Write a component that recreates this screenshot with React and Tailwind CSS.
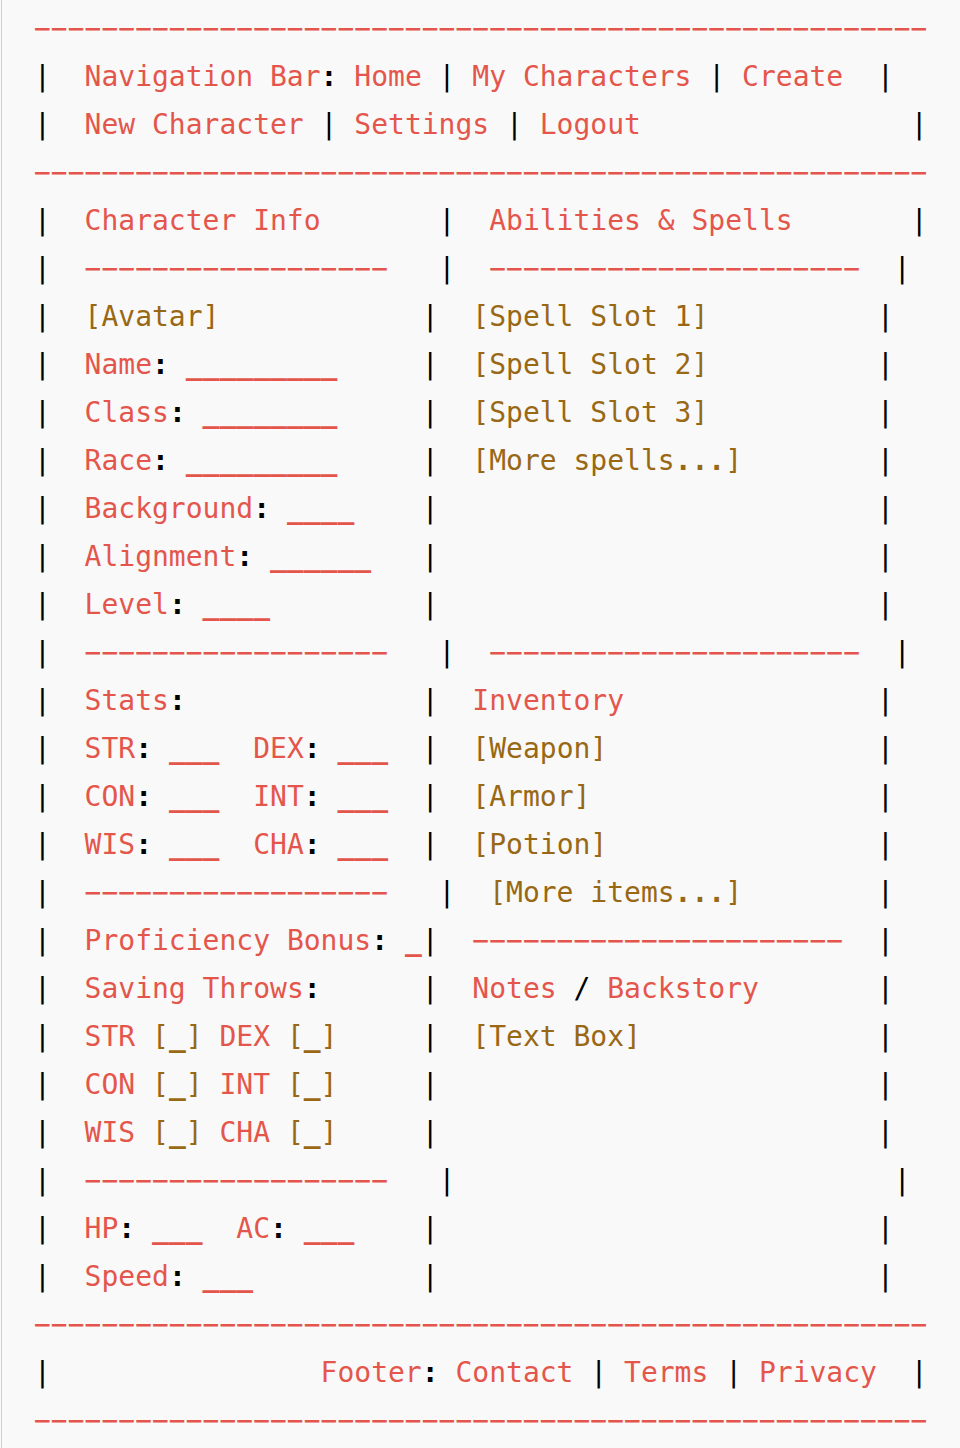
const RULE = "−".repeat(53);
const LEFT_RULE = "−".repeat(18);
const RIGHT_RULE = "−".repeat(22);

// Each row: [left text, divider column, right text, right text column, closing column]
const sheetRows = [
  ["Character Info", 24, "Abilities & Spells", 27, 52],
  [LEFT_RULE, 24, RIGHT_RULE, 27, 51],
  ["[Avatar]", 23, "[Spell Slot 1]", 26, 50],
  ["Name: _________", 23, "[Spell Slot 2]", 26, 50],
  ["Class: ________", 23, "[Spell Slot 3]", 26, 50],
  ["Race: _________", 23, "[More spells...]", 26, 50],
  ["Background: ____", 23, "", 26, 50],
  ["Alignment: ______", 23, "", 26, 50],
  ["Level: ____", 23, "", 26, 50],
  [LEFT_RULE, 24, RIGHT_RULE, 27, 51],
  ["Stats:", 23, "Inventory", 26, 50],
  ["STR: ___  DEX: ___", 23, "[Weapon]", 26, 50],
  ["CON: ___  INT: ___", 23, "[Armor]", 26, 50],
  ["WIS: ___  CHA: ___", 23, "[Potion]", 26, 50],
  [LEFT_RULE, 24, "[More items...]", 27, 50],
  ["Proficiency Bonus: _", 23, RIGHT_RULE, 26, 50],
  ["Saving Throws:", 23, "Notes / Backstory", 26, 50],
  ["STR [_] DEX [_]", 23, "[Text Box]", 26, 50],
  ["CON [_] INT [_]", 23, "", 26, 50],
  ["WIS [_] CHA [_]", 23, "", 26, 50],
  [LEFT_RULE, 24, "", 27, 51],
  ["HP: ___  AC: ___", 23, "", 26, 50],
  ["Speed: ___", 23, "", 26, 50],
];

function formatRow([left, divider, right, rightColumn, end]) {
  const start = ("|  " + left).padEnd(divider) + "|";
  return (start.padEnd(rightColumn) + right).padEnd(end) + "|";
}

// Colons, dots and blanks carry a heavier weight than the words around them.
function Marks({ text }) {
  return text.split(/([:._]+)/).map((part, i) =>
    i % 2 === 1 ? <span key={i} className="font-bold">{part}</span> : part
  );
}

function Line({ text }) {
  const tokens = text.match(/\[[^\]]*\]|[|:/]|\s+|[^\s|:/[\]]+/g) || [];
  return (
    <div>
      {tokens.map((token, i) => {
        if (token[0] === "[") {
          return <span key={i} className="text-[#986814]"><Marks text={token} /></span>;
        }
        if (/^[|:/\s]/.test(token)) return <Marks key={i} text={token} />;
        return <span key={i} className="text-[#e4564b]"><Marks text={token} /></span>;
      })}
    </div>
  );
}

function Item({ children }) {
  return <a href="#" className="text-[#e4564b]">{children}</a>;
}

export default function App() {
  return (
    <div className="min-h-screen bg-[#f9f9f9] pl-px">
      <div className="border-l border-[#d0d0d0] pt-[5px] pb-[3px] pl-8 whitespace-pre font-['DejaVu_Sans_Mono',monospace] text-[28px] leading-[48px] text-black">
        <Line text={RULE} />
        <nav>
          <div>
            {"|  "}
            <span className="text-[#e4564b]">Navigation Bar</span>
            <Marks text=": " />
            <Item>Home</Item>
            {" | "}
            <Item>My Characters</Item>
            {" | "}
            <Item>Create</Item>
            {"  |"}
          </div>
          <div>
            {"|  "}
            <Item>New Character</Item>
            {" | "}
            <Item>Settings</Item>
            {" | "}
            <Item>Logout</Item>
            {" ".repeat(16) + "|"}
          </div>
        </nav>
        <Line text={RULE} />
        <main>
          {sheetRows.map((row, i) => (
            <Line key={i} text={formatRow(row)} />
          ))}
        </main>
        <Line text={RULE} />
        <footer>
          {"|" + " ".repeat(16)}
          <span className="text-[#e4564b]">Footer</span>
          <Marks text=": " />
          <Item>Contact</Item>
          {" | "}
          <Item>Terms</Item>
          {" | "}
          <Item>Privacy</Item>
          {"  |"}
        </footer>
        <Line text={RULE} />
      </div>
    </div>
  );
}
